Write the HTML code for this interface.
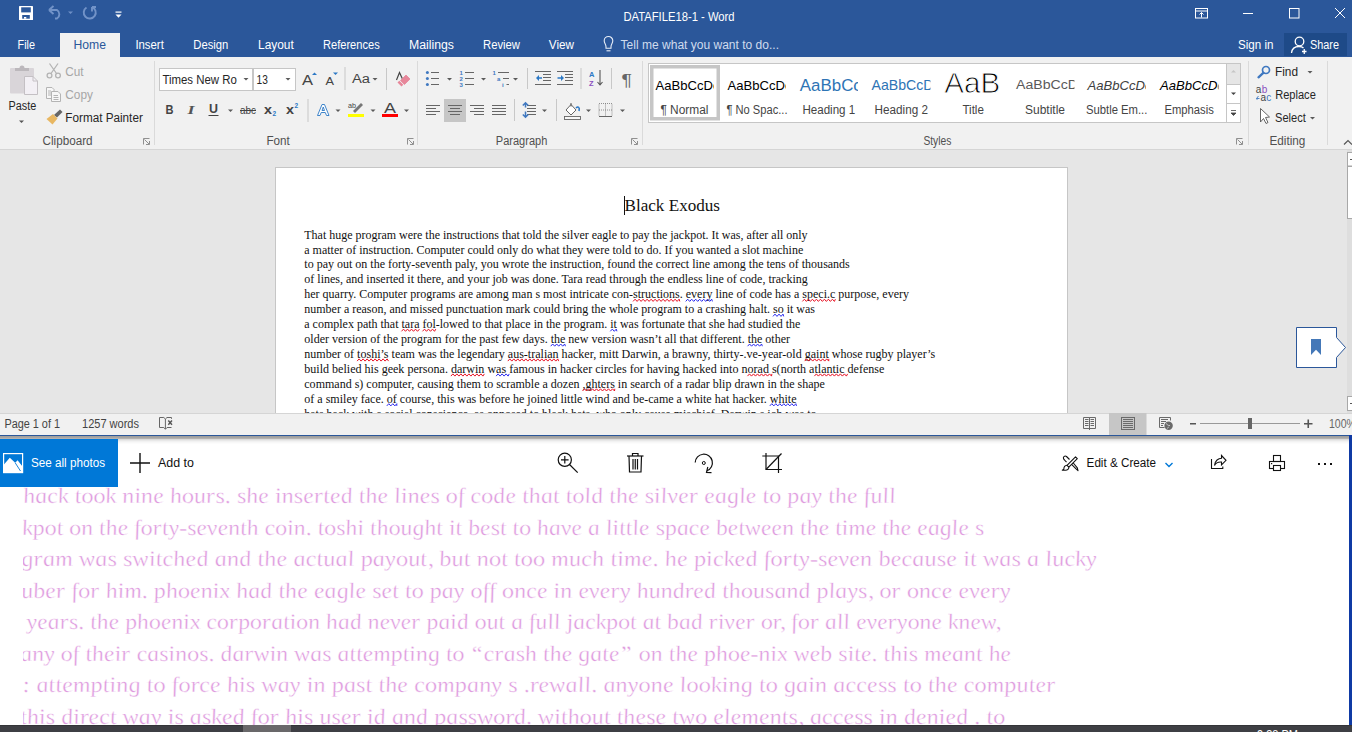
<!DOCTYPE html>
<html><head><meta charset="utf-8"><title>DATAFILE18-1 - Word</title>
<style>
html,body{margin:0;padding:0;width:1352px;height:732px;overflow:hidden;background:#fff}
svg{display:block}
text{font-family:"Liberation Sans",sans-serif}
.sr,.sr text{font-family:"Liberation Serif",serif}
</style></head><body>
<svg width="1352" height="732" viewBox="0 0 1352 732">
<!-- ===== backgrounds ===== -->
<rect x="0" y="0" width="1352" height="57" fill="#2b579a"/>
<rect x="60" y="33" width="60" height="24" fill="#f1f1f1"/>
<rect x="0" y="57" width="1352" height="92" fill="#f1f1f1"/>
<rect x="0" y="149" width="1352" height="1" fill="#d5d5d5"/>
<rect x="0" y="150" width="1352" height="263" fill="#e6e6e6"/>
<!-- page -->
<rect x="275.5" y="167.5" width="792" height="260" fill="#fff" stroke="#c6c6c6" stroke-width="1"/>
<!-- status bar -->
<rect x="0" y="413" width="1352" height="22" fill="#f1f1f1"/>
<rect x="0" y="413" width="1352" height="1" fill="#d5d5d5"/>
<rect x="0" y="435" width="1352" height="1" fill="#2b579a"/>
<!-- photos -->
<rect x="0" y="436" width="1352" height="289" fill="#fff"/>
<rect x="0" y="436" width="1349" height="1" fill="#a2a09d"/>
<rect x="0" y="437" width="1349" height="1" fill="#a6a6a6"/>
<rect x="0" y="438" width="1349" height="1" fill="#b4b2b0"/>
<rect x="0" y="439" width="1349" height="1" fill="#dcdcdc"/>
<rect x="0" y="440" width="1349" height="1" fill="#e8e8e8"/>
<rect x="0" y="441" width="1349" height="1" fill="#f2f2f2"/>
<rect x="0" y="442" width="1349" height="1" fill="#f8f8f8"/>
<rect x="0" y="443" width="1349" height="1" fill="#fcfcfc"/>
<rect x="1349" y="435" width="3" height="290" fill="#0f3aa4"/>
<rect x="0" y="725" width="1352" height="7" fill="#3e3f44"/>
<rect x="0" y="725" width="1352" height="1" fill="#333438"/>
<rect x="243" y="725" width="48" height="7" fill="#69686a"/>
<text x="1257" y="738.7" fill="#fff" font-size="12" textLength="41" lengthAdjust="spacingAndGlyphs">9:38 PM</text>

<!-- ===== title bar ===== -->
<g fill="#fff" font-size="12">
<text x="623.5" y="21.3" textLength="111" lengthAdjust="spacingAndGlyphs">DATAFILE18-1 - Word</text>
<text x="17.5" y="49" textLength="17.5" lengthAdjust="spacingAndGlyphs">File</text>
<text x="135.4" y="49" textLength="28.4" lengthAdjust="spacingAndGlyphs">Insert</text>
<text x="193.3" y="49" textLength="35" lengthAdjust="spacingAndGlyphs">Design</text>
<text x="258" y="49" textLength="35.8" lengthAdjust="spacingAndGlyphs">Layout</text>
<text x="323" y="49" textLength="56.7" lengthAdjust="spacingAndGlyphs">References</text>
<text x="409" y="49" textLength="45" lengthAdjust="spacingAndGlyphs">Mailings</text>
<text x="483" y="49" textLength="37" lengthAdjust="spacingAndGlyphs">Review</text>
<text x="548.8" y="49" textLength="25.2" lengthAdjust="spacingAndGlyphs">View</text>
<text x="620.6" y="49" textLength="158.4" lengthAdjust="spacingAndGlyphs" fill="#d0dcee">Tell me what you want to do...</text>
<text x="1238" y="49" textLength="35.5" lengthAdjust="spacingAndGlyphs">Sign in</text>
</g>
<text x="73.5" y="49" font-size="12" fill="#2b579a" textLength="32.5" lengthAdjust="spacingAndGlyphs">Home</text>
<rect x="1284" y="33" width="63" height="23" fill="#1e4a88"/>
<text x="1310" y="49" font-size="12" fill="#fff" textLength="29" lengthAdjust="spacingAndGlyphs">Share</text>

<!-- ===== status bar text ===== -->
<g fill="#444" font-size="12">
<text x="4.4" y="427.8" textLength="55.6" lengthAdjust="spacingAndGlyphs">Page 1 of 1</text>
<text x="82" y="427.8" textLength="57" lengthAdjust="spacingAndGlyphs">1257 words</text>
<text x="1329" y="428" fill="#666" textLength="27" lengthAdjust="spacingAndGlyphs">100%</text>
</g>

<!-- ===== photos bar ===== -->
<rect x="0" y="439" width="118" height="48" fill="#0078d7"/>
<text x="31" y="467.3" font-size="12.5" fill="#fff" textLength="74" lengthAdjust="spacingAndGlyphs">See all photos</text>
<text x="158" y="467.3" font-size="12.5" fill="#111" textLength="36" lengthAdjust="spacingAndGlyphs">Add to</text>
<text x="1086.6" y="467.2" font-size="12.5" fill="#111" textLength="69.4" lengthAdjust="spacingAndGlyphs">Edit &amp; Create</text>

<defs><clipPath id="docclip"><rect x="0" y="150" width="1346" height="263"/></clipPath><clipPath id="handclip"><rect x="23" y="487" width="1326" height="238"/></clipPath></defs>
<g clip-path="url(#docclip)"><text class="sr" x="624.5" y="211" font-size="16.3" fill="#111" textLength="95.5" lengthAdjust="spacingAndGlyphs">Black Exodus</text>
<rect x="624" y="196" width="1" height="19" fill="#111"/>
<g class="sr" fill="#111" font-size="12.3">
<text x="304.3" y="238.60" textLength="503.3" lengthAdjust="spacingAndGlyphs">That huge program were the instructions that told the silver eagle to pay the jackpot. It was, after all only</text>
<text x="304.3" y="253.53" textLength="498.9" lengthAdjust="spacingAndGlyphs">a matter of instruction. Computer could only do what they were told to do. If you wanted a slot machine</text>
<text x="304.3" y="268.46" textLength="545.5" lengthAdjust="spacingAndGlyphs">to pay out on the forty-seventh paly, you wrote the instruction, found the correct line among the tens of thousands</text>
<text x="304.3" y="283.39" textLength="503.5" lengthAdjust="spacingAndGlyphs">of lines, and inserted it there, and your job was done. Tara read through the endless line of code, tracking</text>
<text x="304.3" y="298.32" textLength="604.7" lengthAdjust="spacingAndGlyphs">her quarry. Computer programs are among man s most intricate con-structions. every line of code has a speci.c purpose, every</text>
<text x="304.3" y="313.25" textLength="510.7" lengthAdjust="spacingAndGlyphs">number a reason, and missed punctuation mark could bring the whole program to a crashing halt. so it was</text>
<text x="304.3" y="328.18" textLength="496.1" lengthAdjust="spacingAndGlyphs">a complex path that tara fol-lowed to that place in the program. it was fortunate that she had studied the</text>
<text x="304.3" y="343.11" textLength="485.7" lengthAdjust="spacingAndGlyphs">older version of the program for the past few days. the new version wasn’t all that different. the other</text>
<text x="304.3" y="358.04" textLength="630.9" lengthAdjust="spacingAndGlyphs">number of toshi’s team was the legendary aus-tralian hacker, mitt Darwin, a brawny, thirty-.ve-year-old gaint whose rugby player’s</text>
<text x="304.3" y="372.97" textLength="580.1" lengthAdjust="spacingAndGlyphs">build belied his geek persona. darwin  was famous in hacker circles for having hacked into norad s(north atlantic defense</text>
<text x="304.3" y="387.90" textLength="520.5" lengthAdjust="spacingAndGlyphs">command s) computer, causing them to scramble a dozen ,ghters in search of a radar blip drawn in the shape</text>
<text x="304.3" y="402.83" textLength="492.2" lengthAdjust="spacingAndGlyphs">of a smiley face. of course, this was before he joined little wind and be-came a white hat hacker. white</text>
<text x="304.3" y="417.76" textLength="512.2" lengthAdjust="spacingAndGlyphs">hats back with a social conscience, as opposed to black hats, who only cause mischief. Darwin s job was to</text>
</g>
<path d="M633.1 301.4 L635.1 299.2 L637.1 301.4 L639.1 299.2 L641.1 301.4 L643.1 299.2 L645.1 301.4 L647.1 299.2 L649.1 301.4 L651.1 299.2 L653.1 301.4 L655.1 299.2 L657.1 301.4 L659.1 299.2 L661.1 301.4 L663.1 299.2 L665.1 301.4 L667.1 299.2 L669.1 301.4 L671.1 299.2 L673.1 301.4 L675.1 299.2 L677.1 301.4 L679.1 299.2 L679.8 301.4" fill="none" stroke="#e81123" stroke-width="1"/>
<path d="M685.7 301.4 L687.7 299.2 L689.7 301.4 L691.7 299.2 L693.7 301.4 L695.7 299.2 L697.7 301.4 L699.7 299.2 L701.7 301.4 L703.7 299.2 L705.7 301.4 L707.7 299.2 L709.7 301.4 L711.7 299.2 L712.4 301.4" fill="none" stroke="#2b2bf0" stroke-width="1"/>
<path d="M802.4 301.4 L804.4 299.2 L806.4 301.4 L808.4 299.2 L810.4 301.4 L812.4 299.2 L814.4 301.4 L816.4 299.2 L818.4 301.4 L820.4 299.2 L822.4 301.4 L824.4 299.2 L826.4 301.4 L828.4 299.2 L830.4 301.4 L832.4 299.2 L834.4 301.4 L835.4 299.2" fill="none" stroke="#e81123" stroke-width="1"/>
<path d="M773.0 316.4 L775.0 314.1 L777.0 316.4 L779.0 314.1 L781.0 316.4 L783.0 314.1 L783.7 316.4" fill="none" stroke="#2b2bf0" stroke-width="1"/>
<path d="M401.5 331.3 L403.5 329.1 L405.5 331.3 L407.5 329.1 L409.5 331.3 L411.5 329.1 L413.5 331.3 L415.5 329.1 L417.5 331.3 L419.5 329.1" fill="none" stroke="#e81123" stroke-width="1"/>
<path d="M422.5 331.3 L424.5 329.1 L426.5 331.3 L428.5 329.1 L430.5 331.3 L432.5 329.1 L434.5 331.3 L435.8 329.1" fill="none" stroke="#e81123" stroke-width="1"/>
<path d="M610.3 331.3 L612.3 329.1 L614.3 331.3 L616.3 329.1 L616.9 331.3" fill="none" stroke="#2b2bf0" stroke-width="1"/>
<path d="M550.7 346.2 L552.7 344.0 L554.7 346.2 L556.7 344.0 L558.7 346.2 L560.7 344.0 L562.7 346.2 L564.7 344.0 L565.4 346.2" fill="none" stroke="#2b2bf0" stroke-width="1"/>
<path d="M747.6 346.2 L749.6 344.0 L751.6 346.2 L753.6 344.0 L755.6 346.2 L757.6 344.0 L759.6 346.2 L761.6 344.0 L762.3 346.2" fill="none" stroke="#2b2bf0" stroke-width="1"/>
<path d="M357.1 361.1 L359.1 358.9 L361.1 361.1 L363.1 358.9 L365.1 361.1 L367.1 358.9 L369.1 361.1 L371.1 358.9 L373.1 361.1 L375.1 358.9 L377.1 361.1 L379.1 358.9 L381.1 361.1 L383.1 358.9 L385.1 361.1 L387.1 358.9 L388.5 361.1" fill="none" stroke="#e81123" stroke-width="1"/>
<path d="M507.8 361.1 L509.8 358.9 L511.8 361.1 L513.8 358.9 L515.8 361.1 L517.8 358.9 L519.8 361.1 L521.8 358.9 L523.8 361.1 L525.8 358.9 L527.8 361.1 L529.8 358.9 L531.8 361.1 L533.8 358.9 L535.8 361.1 L537.8 358.9 L539.8 361.1 L541.8 358.9 L543.8 361.1 L545.8 358.9 L547.8 361.1 L549.8 358.9 L551.8 361.1 L553.8 358.9 L555.8 361.1 L557.8 358.9 L558.6 361.1" fill="none" stroke="#e81123" stroke-width="1"/>
<path d="M804.7 361.1 L806.7 358.9 L808.7 361.1 L810.7 358.9 L812.7 361.1 L814.7 358.9 L816.7 361.1 L818.7 358.9 L820.7 361.1 L822.7 358.9 L824.7 361.1 L826.7 358.9 L828.7 361.1 L828.8 358.9" fill="none" stroke="#e81123" stroke-width="1"/>
<path d="M450.9 376.1 L452.9 373.9 L454.9 376.1 L456.9 373.9 L458.9 376.1 L460.9 373.9 L462.9 376.1 L464.9 373.9 L466.9 376.1 L468.9 373.9 L470.9 376.1 L472.9 373.9 L474.9 376.1 L476.9 373.9 L478.9 376.1 L480.9 373.9 L482.9 376.1 L484.4 373.9" fill="none" stroke="#e81123" stroke-width="1"/>
<path d="M496.1 376.1 L498.1 373.9 L500.1 376.1 L502.1 373.9 L504.1 376.1 L506.1 373.9 L508.1 376.1 L509.2 373.9" fill="none" stroke="#2b2bf0" stroke-width="1"/>
<path d="M747.5 376.1 L749.5 373.9 L751.5 376.1 L753.5 373.9 L755.5 376.1 L757.5 373.9 L759.5 376.1 L761.5 373.9 L763.5 376.1 L765.5 373.9 L767.5 376.1 L769.5 373.9 L771.5 376.1 L771.9 373.9" fill="none" stroke="#e81123" stroke-width="1"/>
<path d="M814.4 376.1 L816.4 373.9 L818.4 376.1 L820.4 373.9 L822.4 376.1 L824.4 373.9 L826.4 376.1 L828.4 373.9 L830.4 376.1 L832.4 373.9 L834.4 376.1 L836.4 373.9 L838.4 376.1 L840.4 373.9 L842.4 376.1 L844.4 373.9 L846.4 376.1 L847.6 373.9" fill="none" stroke="#e81123" stroke-width="1"/>
<path d="M582.5 391.0 L584.5 388.8 L586.5 391.0 L588.5 388.8 L590.5 391.0 L592.5 388.8 L594.5 391.0 L596.5 388.8 L598.5 391.0 L600.5 388.8 L602.5 391.0 L604.5 388.8 L606.5 391.0 L608.5 388.8 L610.5 391.0 L612.5 388.8 L614.5 391.0 L614.8 388.8" fill="none" stroke="#e81123" stroke-width="1"/>
<path d="M386.8 405.9 L388.8 403.7 L390.8 405.9 L392.8 403.7 L394.8 405.9 L396.8 403.7 L396.8 405.9" fill="none" stroke="#2b2bf0" stroke-width="1"/>
<path d="M769.8 405.9 L771.8 403.7 L773.8 405.9 L775.8 403.7 L777.8 405.9 L779.8 403.7 L781.8 405.9 L783.8 403.7 L785.8 405.9 L787.8 403.7 L789.8 405.9 L791.8 403.7 L793.8 405.9 L795.8 403.7 L796.5 405.9" fill="none" stroke="#2b2bf0" stroke-width="1"/>
</g>
<g clip-path="url(#handclip)"><g class="sr" fill="#de9ade" font-size="22" font-style="italic" stroke="#fff" stroke-width="0.35">
<text transform="translate(24,503.0) skewX(9)" x="0" y="0" textLength="872.6" lengthAdjust="spacingAndGlyphs">hack took nine hours. she inserted the lines of code that told the silver eagle to pay the full</text>
<text transform="translate(23,534.5) skewX(9)" x="0" y="0" textLength="962.0" lengthAdjust="spacingAndGlyphs">kpot on the forty-seventh coin. toshi thought it best to have a little space between the time the eagle s</text>
<text transform="translate(22,566.0) skewX(9)" x="0" y="0" textLength="1075.7" lengthAdjust="spacingAndGlyphs">gram was switched and the actual payout, but not too much time. he picked forty-seven because it was a lucky</text>
<text transform="translate(22,597.5) skewX(9)" x="0" y="0" textLength="989.5" lengthAdjust="spacingAndGlyphs">uber for him. phoenix had the eagle set to pay off once in every hundred thousand plays, or once every</text>
<text transform="translate(27.5,629.0) skewX(9)" x="0" y="0" textLength="974.3" lengthAdjust="spacingAndGlyphs">years. the phoenix corporation had never paid out a full jackpot at bad river or, for all everyone knew,</text>
<text transform="translate(21,660.5) skewX(9)" x="0" y="0" textLength="991.0" lengthAdjust="spacingAndGlyphs">any of their casinos. darwin was attempting to “crash the gate” on the phoe-nix web site. this meant he</text>
<text transform="translate(23,692.0) skewX(9)" x="0" y="0" textLength="1033.5" lengthAdjust="spacingAndGlyphs">: attempting to force his way in past the company s .rewall. anyone looking to gain access to the computer</text>
<text transform="translate(21,723.5) skewX(9)" x="0" y="0" textLength="985.0" lengthAdjust="spacingAndGlyphs">this direct way is asked for his user id and password. without these two elements, access in denied . to</text>
</g></g>
<!-- HAND -->
<!-- ribbon labels -->
<g font-size="12" fill="#262626">
<text x="8.5" y="110" textLength="27.7" lengthAdjust="spacingAndGlyphs">Paste</text>
<text x="65.3" y="76.2" textLength="18.3" lengthAdjust="spacingAndGlyphs" fill="#a6a6a6">Cut</text>
<text x="65.3" y="99" textLength="27.6" lengthAdjust="spacingAndGlyphs" fill="#a6a6a6">Copy</text>
<text x="65.3" y="122" textLength="77.5" lengthAdjust="spacingAndGlyphs">Format Painter</text>
<text x="1275" y="75.5" textLength="23" lengthAdjust="spacingAndGlyphs">Find</text>
<text x="1275.2" y="98.7" textLength="40.6" lengthAdjust="spacingAndGlyphs">Replace</text>
<text x="1275" y="122" textLength="30.8" lengthAdjust="spacingAndGlyphs">Select</text>
</g>
<g font-size="12" fill="#505050">
<text x="42.6" y="145" textLength="50" lengthAdjust="spacingAndGlyphs">Clipboard</text>
<text x="266.4" y="145.3" textLength="23.4" lengthAdjust="spacingAndGlyphs">Font</text>
<text x="495.8" y="144.6" textLength="51.5" lengthAdjust="spacingAndGlyphs">Paragraph</text>
<text x="923.4" y="144.6" textLength="28" lengthAdjust="spacingAndGlyphs">Styles</text>
<text x="1269.5" y="144.6" textLength="35.9" lengthAdjust="spacingAndGlyphs">Editing</text>
</g>
<!-- font boxes -->
<rect x="159.5" y="68.5" width="93" height="22" fill="#fff" stroke="#c6c6c6"/>
<rect x="253.5" y="68.5" width="42" height="22" fill="#fff" stroke="#c6c6c6"/>
<g font-size="12" fill="#262626">
<text x="162.4" y="84" textLength="74.5" lengthAdjust="spacingAndGlyphs">Times New Ro</text>
<text x="256.5" y="84" textLength="11.3" lengthAdjust="spacingAndGlyphs">13</text>
</g>
<!-- styles gallery -->
<rect x="648.5" y="63.5" width="592" height="59" fill="#fff" stroke="#c6c6c6"/>
<rect x="651.75" y="66.75" width="66.5" height="52" fill="none" stroke="#c6c6c6" stroke-width="3.5"/>
<rect x="1226.5" y="63.5" width="14" height="59" fill="#fff" stroke="#c6c6c6"/>
<rect x="1227" y="64" width="13" height="20" fill="#e6e6e6"/>
<line x1="1226.5" y1="84.5" x2="1240.5" y2="84.5" stroke="#c6c6c6"/>
<line x1="1226.5" y1="103.5" x2="1240.5" y2="103.5" stroke="#c6c6c6"/>
<path d="M1231 72.5 L1236 72.5 L1233.5 70 Z" fill="#c6c6c6"/>
<path d="M1231 92.5 L1236 92.5 L1233.5 95 Z" fill="#444"/>
<path d="M1231 110.5 h5 M1231 113 L1236 113 L1233.5 115.5 Z" fill="#444" stroke="#444" stroke-width="0.8"/>
<defs>
<clipPath id="sc1"><rect x="653" y="70" width="61" height="47"/></clipPath>
<clipPath id="sc2"><rect x="725" y="70" width="61" height="47"/></clipPath>
<clipPath id="sc3"><rect x="797" y="64" width="61" height="53"/></clipPath>
<clipPath id="sc4"><rect x="869" y="64" width="61.5" height="53"/></clipPath>
<clipPath id="sc5"><rect x="941" y="72" width="61" height="45"/></clipPath>
<clipPath id="sc6"><rect x="1013" y="64" width="61.5" height="53"/></clipPath>
<clipPath id="sc7"><rect x="1085" y="64" width="61" height="53"/></clipPath>
<clipPath id="sc8"><rect x="1157" y="64" width="61.5" height="53"/></clipPath>
</defs>
<g font-size="12.6" fill="#000">
<text clip-path="url(#sc1)" x="655.5" y="90" textLength="64" lengthAdjust="spacingAndGlyphs">AaBbCcDc</text>
<text clip-path="url(#sc2)" x="727.6" y="90" textLength="64" lengthAdjust="spacingAndGlyphs">AaBbCcDc</text>
<text clip-path="url(#sc3)" x="799.8" y="91.2" font-size="16.7" fill="#2e74b5" textLength="62" lengthAdjust="spacingAndGlyphs">AaBbCc</text>
<text clip-path="url(#sc4)" x="871.5" y="89.6" font-size="14.5" fill="#2e74b5" textLength="62" lengthAdjust="spacingAndGlyphs">AaBbCcD</text>
<text clip-path="url(#sc5)" x="944.3" y="92.5" font-size="29" fill="#000" stroke="#fff" stroke-width="0.9" textLength="56" lengthAdjust="spacingAndGlyphs">AaB</text>
<text clip-path="url(#sc6)" x="1016" y="89.3" font-size="12" fill="#595959" textLength="62" lengthAdjust="spacingAndGlyphs">AaBbCcD</text>
<text clip-path="url(#sc7)" x="1087.6" y="90.2" font-style="italic" fill="#404040" textLength="64" lengthAdjust="spacingAndGlyphs">AaBbCcDc</text>
<text clip-path="url(#sc8)" x="1160" y="90.2" font-style="italic" fill="#000" textLength="64" lengthAdjust="spacingAndGlyphs">AaBbCcDc</text>
</g>
<g font-size="12" fill="#444">
<text x="660.4" y="113.8" textLength="48" lengthAdjust="spacingAndGlyphs">¶ Normal</text>
<text x="726.5" y="113.8" textLength="61" lengthAdjust="spacingAndGlyphs">¶ No Spac...</text>
<text x="802.4" y="113.8" textLength="52.8" lengthAdjust="spacingAndGlyphs">Heading 1</text>
<text x="874.6" y="113.8" textLength="53.4" lengthAdjust="spacingAndGlyphs">Heading 2</text>
<text x="962.4" y="113.8" textLength="21.5" lengthAdjust="spacingAndGlyphs">Title</text>
<text x="1025" y="113.8" textLength="40" lengthAdjust="spacingAndGlyphs">Subtitle</text>
<text x="1086" y="113.8" textLength="61.4" lengthAdjust="spacingAndGlyphs">Subtle Em...</text>
<text x="1164.5" y="113.8" textLength="49.3" lengthAdjust="spacingAndGlyphs">Emphasis</text>
</g>
<!-- group separators -->
<g fill="#dadada">
<rect x="154" y="61" width="1" height="84"/>
<rect x="417" y="61" width="1" height="84"/>
<rect x="642" y="61" width="1" height="84"/>
<rect x="1248" y="61" width="1" height="84"/>
<rect x="1327" y="61" width="1" height="84"/>
</g>

<!-- QAT -->
<rect x="19" y="6" width="14" height="14" rx="0.6" fill="#fff"/>
<rect x="21.2" y="7.3" width="9.6" height="5.1" fill="#2b579a"/>
<rect x="22.2" y="15" width="7.6" height="3.7" fill="#2b579a"/>
<rect x="24" y="17" width="2.3" height="1.7" fill="#fff"/>
<g fill="none" stroke="#7293c8" stroke-width="1.9" transform="translate(0,-1)">
<path d="M49 11 L53.5 7 M49 11 L53.5 15 M49 11 H57 A5 5 0 0 1 57 19.5 H55"/>
<path d="M86.5 8.5 A6 6 0 1 0 92 8 M92 8 L92 12.5 M92 8 L96 8"/>
</g>
<path d="M68 11.5 H73 L70.5 14 Z" fill="#6f90c6"/>
<rect x="115.5" y="11.5" width="6" height="1.2" fill="#fff"/>
<path d="M115.5 14.5 H121.5 L118.5 17.8 Z" fill="#fff"/>
<!-- window controls -->
<g fill="none" stroke="#fff" stroke-width="1">
<rect x="1195.5" y="8.5" width="12" height="9.5"/>
<path d="M1195.5 11 H1207.5 M1201.5 17.5 V12.5 M1199.5 14.5 L1201.5 12.5 L1203.5 14.5"/>
<path d="M1243 13.5 H1253"/>
<rect x="1289.5" y="8.5" width="9.5" height="9.5"/>
<path d="M1335 8 L1345 18 M1345 8 L1335 18"/>
</g>
<!-- share person -->
<g fill="none" stroke="#fff" stroke-width="1.3">
<circle cx="1299.5" cy="41.5" r="4.3"/>
<path d="M1291.5 53 C1292 48.5 1295 46.5 1299 46.5 C1301 46.5 1302.5 47 1303.5 48"/>
<path d="M1302 51.5 H1306.5 M1304.25 49 V54"/>
</g>
<!-- tell me bulb -->
<g fill="none" stroke="#e8eef8" stroke-width="1.1" transform="translate(1,0.3)">
<path d="M605 48 V46.5 C605 44 603.2 43 603.2 40.5 A4.3 4.3 0 0 1 611.8 40.5 C611.8 43 610 44 610 46.5 V48 Z"/>
<path d="M605.5 50.5 H609.5"/>
</g>

<!-- paste -->
<rect x="10" y="68" width="24" height="25.5" rx="1" fill="#d9d5d9"/>
<path d="M15 71 V68 H19.5 A2.5 2.5 0 0 1 24.5 68 H29 V71 Z" fill="#bcb8bc"/>
<path d="M24.5 76.5 H33 L37.5 81 V94.5 H24.5 Z" fill="#f3f0f5" stroke="#c4c0c4" stroke-width="1"/>
<path d="M33 76.5 V81 H37.5" fill="none" stroke="#c4c0c4"/>
<path d="M19 120.5 H24 L21.5 123 Z" fill="#555"/>
<!-- cut -->
<g fill="none" stroke="#b4b4b4" stroke-width="1.3">
<circle cx="49.5" cy="75.5" r="2.4"/>
<circle cx="58" cy="75.5" r="2.4"/>
<path d="M51 73.5 L58 63.5 M56.5 73.5 L49.5 63.5"/>
</g>
<!-- copy -->
<g fill="#f7f7f7" stroke="#b4b4b4" stroke-width="1">
<path d="M46.5 87.5 H52 L54 89.5 V98.5 H46.5 Z"/>
<path d="M51.5 91.5 H58 L60.5 94 V101.5 H51.5 Z"/>
<path d="M48 91 H51 M48 93 H51 M48 95 H51 M53.5 95.5 H58 M53.5 97.5 H58.5 M53.5 99.5 H58.5" fill="none"/>
</g>
<!-- format painter -->
<path d="M54 115 L60 109.5 L62.5 112 L57 117.5 Z" fill="#666"/>
<path d="M46.5 119 L53 114 L57.5 118.5 L52.5 124.5 Z" fill="#e8b762"/>
<!-- launchers -->
<g fill="none" stroke="#777" stroke-width="0.8">
<path d="M143.5 144.5 V138.5 H149.5 M144.5 139.5 L149 144 M146 144.5 H149.5 V141"/>
<path d="M407.5 144.5 V138.5 H413.5 M408.5 139.5 L413 144 M410 144.5 H413.5 V141"/>
<path d="M631.5 144.5 V138.5 H637.5 M632.5 139.5 L637 144 M634 144.5 H637.5 V141"/>
<path d="M1236.5 144.5 V138.5 H1242.5 M1237.5 139.5 L1242 144 M1239 144.5 H1242.5 V141"/>
</g>
<path d="M1344 144.5 L1348 140.5 L1352 144.5" fill="none" stroke="#555" stroke-width="1.2"/>

<!-- dropdown carets in boxes -->
<path d="M243.5 78 H248.5 L246 80.5 Z" fill="#5a5a5a"/>
<path d="M285.5 78 H290.5 L288 80.5 Z" fill="#5a5a5a"/>
<!-- grow/shrink -->
<text x="302" y="85" font-size="14" fill="#444" textLength="11" lengthAdjust="spacingAndGlyphs">A</text>
<path d="M312 75 L314.5 72.5 L317 75 Z" fill="#2b78c5"/>
<text x="325.5" y="85" font-size="11" fill="#444" textLength="8.5" lengthAdjust="spacingAndGlyphs">A</text>
<path d="M333 72.5 H338 L335.5 75 Z" fill="#2b78c5"/>
<rect x="344.5" y="67" width="1" height="23" fill="#c8c8c8"/>
<text x="352" y="83" font-size="12" fill="#444" textLength="18" lengthAdjust="spacingAndGlyphs">Aa</text>
<path d="M372.5 78 H377.5 L375 80.5 Z" fill="#5a5a5a"/>
<rect x="386" y="68" width="1" height="22" fill="#c8c8c8"/>
<!-- clear formatting -->
<path d="M396.5 80 L399.5 72.5 L402.5 79" fill="none" stroke="#444" stroke-width="1.2"/>
<path d="M400.5 80.5 L406 75 L410 79 L404.5 84.5 Z" fill="#e7879a" stroke="#e7879a" stroke-width="0.8" stroke-linejoin="round"/>
<path d="M397.5 82.5 L399.3 80.7 L403.3 84.7 L401.5 86.5 Z" fill="#e7879a"/>
<!-- row 2 -->
<text x="165.6" y="114" font-size="12.5" font-weight="bold" fill="#444" textLength="8" lengthAdjust="spacingAndGlyphs">B</text>
<text class="sr" x="187.5" y="114" font-size="13" font-style="italic" font-weight="bold" fill="#555" textLength="7" lengthAdjust="spacingAndGlyphs">I</text>
<text x="209" y="113" font-size="12.5" font-weight="bold" fill="#444" textLength="9" lengthAdjust="spacingAndGlyphs">U</text>
<rect x="208.5" y="115" width="10" height="1" fill="#444"/>
<path d="M228 109.5 H233 L230.5 112 Z" fill="#5a5a5a"/>
<text x="240" y="114" font-size="10.5" fill="#444" textLength="16" lengthAdjust="spacingAndGlyphs">abc</text>
<rect x="240" y="110" width="16" height="1" fill="#444"/>
<text x="264" y="114" font-size="12" font-weight="bold" fill="#444" textLength="8" lengthAdjust="spacingAndGlyphs">x</text>
<text x="272.5" y="116" font-size="6.5" font-weight="bold" fill="#2b78c5">2</text>
<text x="286" y="114" font-size="12" font-weight="bold" fill="#444" textLength="8" lengthAdjust="spacingAndGlyphs">x</text>
<text x="294.5" y="108" font-size="6.5" font-weight="bold" fill="#2b78c5">2</text>
<rect x="307.5" y="99" width="1" height="23" fill="#c8c8c8"/>
<!-- text effects A -->
<path d="M317.5 115.5 L322 104.5 H324.5 L329 115.5 H326.5 L325.3 112.5 H321.2 L320 115.5 Z M322 110.5 H324.5 L323.25 107 Z" fill="#fff" stroke="#2b78c5" stroke-width="0.9"/>
<path d="M335.5 109.5 H340.5 L338 112 Z" fill="#5a5a5a"/>
<!-- highlight -->
<text x="348" y="108" font-size="8" fill="#444" textLength="8" lengthAdjust="spacingAndGlyphs">ab</text>
<path d="M353 111 L361 103 L363 105 L355 113 Z" fill="#777"/>
<rect x="348" y="114" width="16" height="3" fill="#ffff00"/>
<path d="M370.5 109.5 H375.5 L373 112 Z" fill="#5a5a5a"/>
<!-- font color -->
<text x="384" y="113" font-size="14" fill="#444" textLength="12" lengthAdjust="spacingAndGlyphs">A</text>
<rect x="382" y="114" width="16" height="3" fill="#ff0000"/>
<path d="M404 109.5 H409 L406.5 112 Z" fill="#5a5a5a"/>

<g fill="#3f78c0">
<circle cx="427.4" cy="72.5" r="1.5"/><circle cx="427.4" cy="78.5" r="1.5"/><circle cx="427.4" cy="84.5" r="1.5"/>
</g>
<g fill="#666">
<rect x="431" y="72" width="8" height="1"/><rect x="431" y="78" width="8" height="1"/><rect x="431" y="84" width="8" height="1"/>
<rect x="465" y="72" width="9" height="1"/><rect x="465" y="78" width="9" height="1"/><rect x="465" y="84" width="9" height="1"/>
<rect x="498" y="72" width="11" height="1"/><rect x="503" y="78" width="6" height="1"/><rect x="506.5" y="84" width="2.5" height="1"/>
</g>
<g font-size="6" fill="#3f78c0" font-weight="bold">
<text x="459.5" y="75">1</text><text x="459.5" y="81">2</text><text x="459.5" y="87">3</text>
<text x="492.5" y="75">1</text><text x="497" y="81">a</text><text x="502" y="87">i</text>
</g>
<path d="M447 78 H452 L449.5 80.5 Z M481 78 H486 L483.5 80.5 Z M513 78 H518 L515.5 80.5 Z" fill="#5a5a5a"/>
<rect x="527" y="68" width="1" height="21" fill="#c8c8c8"/>
<!-- indent -->
<g fill="#666">
<rect x="535" y="71" width="16" height="1"/><rect x="543" y="74" width="8" height="1"/><rect x="543" y="77" width="8" height="1"/><rect x="543" y="80" width="8" height="1"/><rect x="535" y="84" width="16" height="1"/>
<rect x="557" y="71" width="16" height="1"/><rect x="565" y="74" width="8" height="1"/><rect x="565" y="77" width="8" height="1"/><rect x="565" y="80" width="8" height="1"/><rect x="557" y="84" width="16" height="1"/>
</g>
<path d="M536 78 L539 75 V77.2 H542 V78.8 H539 V81 Z" fill="#2b78c5"/>
<path d="M564 78 L561 75 V77.2 H557.5 V78.8 H561 V81 Z" fill="#2b78c5"/>
<rect x="580.5" y="68" width="1" height="21" fill="#c8c8c8"/>
<!-- sort -->
<text x="589" y="77" font-size="7.5" fill="#2b78c5" font-weight="bold">A</text>
<text x="589" y="86" font-size="7.5" fill="#8a4fbf" font-weight="bold">Z</text>
<path d="M600 70 V85 M597.5 82 L600 85 L602.5 82" fill="none" stroke="#555" stroke-width="1.1"/>
<rect x="611" y="68" width="1" height="21" fill="#c8c8c8"/>
<text x="621.5" y="85.5" font-size="16.5" fill="#666" textLength="10.5" lengthAdjust="spacingAndGlyphs">¶</text>
<!-- row 2 -->
<rect x="444" y="99" width="22" height="23" fill="#c6c6c6"/>
<g fill="#666">
<rect x="426" y="105" width="14" height="1"/><rect x="426" y="108" width="10" height="1"/><rect x="426" y="111" width="14" height="1"/><rect x="426" y="114" width="10" height="1"/>
<rect x="448" y="105" width="14" height="1"/><rect x="450" y="108" width="10" height="1"/><rect x="448" y="111" width="14" height="1"/><rect x="450" y="114" width="10" height="1"/>
<rect x="470" y="105" width="14" height="1"/><rect x="474" y="108" width="10" height="1"/><rect x="470" y="111" width="14" height="1"/><rect x="474" y="114" width="10" height="1"/>
<rect x="492" y="105" width="14" height="1"/><rect x="492" y="108" width="14" height="1"/><rect x="492" y="111" width="14" height="1"/><rect x="492" y="114" width="14" height="1"/>
<rect x="527" y="105" width="9" height="1"/><rect x="527" y="108" width="9" height="1"/><rect x="527" y="111" width="9" height="1"/><rect x="527" y="114" width="9" height="1"/>
</g>
<rect x="514" y="99" width="1" height="22" fill="#c8c8c8"/>
<path d="M525.5 103 V107.5 M525.5 111.5 V117 M522.8 105.5 L525.5 102.8 L528.2 105.5 M522.8 114.5 L525.5 117.2 L528.2 114.5" fill="none" stroke="#3f78c0" stroke-width="1.5"/>
<path d="M542 109.5 H547 L544.5 112 Z" fill="#5a5a5a"/>
<rect x="556" y="99" width="1" height="22" fill="#c8c8c8"/>
<!-- shading -->
<path d="M566 110 L571 104.5 L576 110 L571 115 Z" fill="#fff" stroke="#555" stroke-width="0.9"/>
<path d="M571 103 V106.5" stroke="#555" stroke-width="1"/>
<path d="M576 108 C578 106 580 107 579 111" fill="none" stroke="#2b78c5" stroke-width="1.6"/>
<rect x="564.5" y="116.5" width="16" height="3" fill="#f7f7f7" stroke="#666" stroke-width="0.9"/>
<path d="M586 109.5 H591 L588.5 112 Z" fill="#5a5a5a"/>
<!-- borders -->
<rect x="599" y="103.5" width="13" height="13" fill="none" stroke="#777" stroke-width="0.8" stroke-dasharray="1 1"/>
<path d="M605.5 103.5 V116.5 M599 110 H612" stroke="#777" stroke-width="0.8" stroke-dasharray="1 1"/>
<rect x="599" y="116" width="13" height="1" fill="#666"/>
<path d="M620 109.5 H625 L622.5 112 Z" fill="#5a5a5a"/>

<!-- find -->
<circle cx="1266" cy="70" r="3.5" fill="none" stroke="#3f78c0" stroke-width="1.7"/>
<path d="M1263.3 72.8 L1258.5 77.3" stroke="#3f78c0" stroke-width="2.3" stroke-linecap="round"/>
<path d="M1307.5 71 H1312.5 L1310 73.5 Z" fill="#5a5a5a"/>
<!-- replace -->
<text x="1255.8" y="93" font-size="10" fill="#444">a</text>
<text x="1261.8" y="92.5" font-size="10" fill="#8a4fbf">b</text>
<text x="1260.5" y="101" font-size="10" fill="#444">a</text>
<text x="1266.3" y="101" font-size="10" fill="#3f78c0">c</text>
<path d="M1258.5 96 L1256.5 98.5 H1259.5 M1257.2 99.8 L1256.5 98.5" fill="none" stroke="#3f78c0" stroke-width="0.9"/>
<!-- select -->
<path d="M1260.5 108.5 V122 L1263.5 118.5 L1266 123.5 L1268 122.5 L1265.5 117.5 L1269.5 117 Z" fill="#fff" stroke="#555" stroke-width="0.9"/>
<path d="M1310 117 H1315 L1312.5 119.5 Z" fill="#5a5a5a"/>

<!-- vertical scrollbar -->
<rect x="1347" y="150" width="5" height="263" fill="#dedede"/>
<rect x="1347.5" y="152.5" width="6" height="13.5" fill="#fff" stroke="#a8a8a8"/>
<rect x="1347.5" y="166.5" width="6" height="52" fill="#fff" stroke="#a8a8a8"/>
<rect x="1347.5" y="396.5" width="6" height="14" fill="#fff" stroke="#a8a8a8"/>
<rect x="1350" y="159" width="3" height="1" fill="#555"/>
<rect x="1350" y="403" width="3" height="1" fill="#555"/>
<!-- bookmark -->
<path d="M1296.5 327.5 H1336.5 V337.5 L1345.5 347.5 L1336.5 357.5 V367.5 H1296.5 Z" fill="#fff" stroke="#2b579a" stroke-width="1"/>
<path d="M1311 339 H1321 V355 L1316 349.8 L1311 355 Z" fill="#4478b8"/>
<!-- status bar icons -->
<g fill="none" stroke="#666" stroke-width="1">
<path d="M163.8 417.5 H159.5 V427.5 H163.8 L165.4 429.3 L167 427.5 H171.5"/>
<path d="M163.8 417.5 L165.4 419 L167 417.5 H171.5 V418.8"/>
<path d="M165.4 419 V429"/>
</g>
<path d="M168.3 420.5 L172 424.8 M172 420.5 L168.3 424.8" stroke="#555" stroke-width="1.4"/>
<rect x="1109" y="413" width="37.5" height="22" fill="#c6c6c6"/>
<g fill="none" stroke="#6a6a6a" stroke-width="1">
<path d="M1083.5 417.5 H1089.5 V428.5 H1083.5 Z M1089.5 417.5 H1095.5 V428.5 H1089.5 Z"/>
<path d="M1085 419.5 H1088.5 M1085 421.5 H1088.5 M1085 423.5 H1088.5 M1085 425.5 H1088.5 M1090.5 419.5 H1094 M1090.5 421.5 H1094 M1090.5 423.5 H1094 M1090.5 425.5 H1094"/>
<path d="M1089.5 428 V430"/>
<rect x="1121.5" y="417.5" width="13" height="12"/>
<path d="M1123 419.5 H1133 M1123 421.5 H1133 M1123 423.5 H1133 M1123 425.5 H1133 M1123 427.5 H1133"/>
<path d="M1164.5 427.5 H1159.5 V417.5 H1170.5 V420.5"/>
<path d="M1161 419.5 H1168 M1161 421.5 H1166 M1161 423.5 H1164 M1161 425.5 H1163"/>
</g>
<circle cx="1168.6" cy="425.8" r="4.2" fill="#6a6a6a"/>
<path d="M1166 423.5 C1167.5 424.5 1168 426 1170 425.5 M1167.5 428.5 L1168.5 426.8" stroke="#d0d0d0" stroke-width="0.9" fill="none"/>
<rect x="1190" y="423" width="6" height="1.5" fill="#555"/>
<rect x="1200" y="423" width="100" height="1" fill="#999"/>
<rect x="1248" y="418" width="4" height="11" fill="#666"/>
<path d="M1304 423.75 H1312.5 M1308.25 419.5 V428" stroke="#555" stroke-width="1.6"/>

<!-- see all photos icon -->
<rect x="3.6" y="453.6" width="19" height="19" fill="none" stroke="#fff" stroke-width="1.2"/>
<path d="M3.5 472.5 V465 L9.8 457.8 L15.2 462.8 L17.6 460.3 L22.5 466.5 V472.5 Z" fill="#fff"/>
<path d="M15.2 462.8 L20.5 471" stroke="#0078d7" stroke-width="0.9"/>
<!-- add to -->
<path d="M130 463 H150 M140 453 V473" stroke="#111" stroke-width="1.4"/>
<!-- zoom -->
<circle cx="564.8" cy="459.8" r="6.6" fill="none" stroke="#111" stroke-width="1.2"/>
<path d="M564.8 456 V463.6 M561 459.8 H568.6" stroke="#111" stroke-width="1.2"/>
<path d="M569.5 464.5 L577.7 472.7" stroke="#111" stroke-width="1.2"/>
<!-- trash -->
<g fill="none" stroke="#111" stroke-width="1.2">
<path d="M627 456 H643.5"/>
<path d="M632.5 456 V453.5 H638 V456"/>
<path d="M629 456 L629.5 472 H641 L641.5 456"/>
<path d="M633 459 V469.5 M635.25 459 V469.5 M637.5 459 V469.5"/>
</g>
<!-- rotate -->
<path d="M695.2 462.5 A8.6 8.6 0 1 1 707 470.8" fill="none" stroke="#111" stroke-width="1.2"/>
<path d="M707.8 467 L706.5 472.5 L711.5 472.7" fill="none" stroke="#111" stroke-width="1.2"/>
<circle cx="703.8" cy="463" r="1.5" fill="none" stroke="#111" stroke-width="1"/>
<!-- crop -->
<g fill="none" stroke="#111" stroke-width="1.2">
<path d="M762.3 456 H778.5 V473"/>
<path d="M766 453 V469.5 H782"/>
<path d="M766 469.5 L781.5 453.5"/>
</g>
<!-- edit & create -->
<g fill="none" stroke="#111" stroke-width="1.1" stroke-linejoin="round">
<path d="M1075.5 456.8 L1077.3 458.6 L1068.8 467.1 L1067 465.3 Z"/>
<path d="M1067 465.3 C1064.8 465.5 1063.8 467.5 1063.8 469.2 L1062.3 470.2 H1065.5 C1067.5 470.2 1069 468.8 1068.8 467.1"/>
<path d="M1069.5 459.5 L1066.5 456.5 C1065.3 455.6 1063.6 456.2 1063.4 457.6 C1063.2 458.6 1063.8 459.3 1064.5 460 L1066.5 462.2"/>
<path d="M1071.6 464.3 L1075.8 468.6 L1078 470.6 L1077.3 467.8 L1073.3 463"/>
</g>
<path d="M1165.5 463 L1169 466.5 L1172.5 463" fill="none" stroke="#0078d7" stroke-width="1.4"/>
<!-- share -->
<g fill="none" stroke="#111" stroke-width="1.1">
<path d="M1211.5 459 V468.5 H1222.8 V466.5"/>
<path d="M1214.5 465.5 C1215 460.5 1218.5 458.3 1221.5 458.3 V455.5 L1226 460.3 L1221.5 465 V462 C1218.5 461.8 1215.8 462.8 1214.5 465.5 Z"/>
</g>
<!-- print -->
<g fill="none" stroke="#111" stroke-width="1.1">
<rect x="1273.5" y="455.5" width="7" height="6"/>
<rect x="1269.5" y="461.5" width="15" height="7"/>
<rect x="1273.5" y="465.5" width="7" height="5" fill="#fff"/>
</g>
<rect x="1271" y="463" width="1.2" height="1.2" fill="#111"/>
<g fill="#111">
<rect x="1318" y="463" width="2" height="2"/><rect x="1324" y="463" width="2" height="2"/><rect x="1330" y="463" width="2" height="2"/>
</g>

<!-- ICONS -->
</svg>
</body></html>
